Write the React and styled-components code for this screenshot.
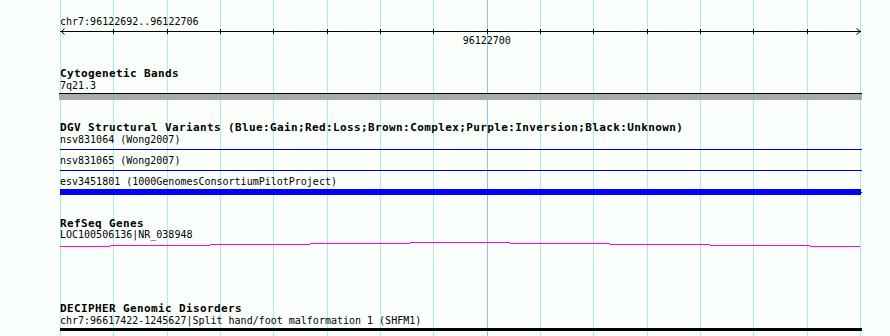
import React from 'react';
import styled, {createGlobalStyle} from 'styled-components';

// browser coordinates: track area runs from x=60 to x=860 for 15 bases
const TRACK_LEFT = 60;
const TRACK_WIDTH = 800;
const BASES = 15;
const START = 96122692;
const gridX = Array.from({length: BASES + 1}, (_, i) => Math.round(TRACK_LEFT + i * TRACK_WIDTH / BASES));
const HIGHLIGHT = 487;

const GlobalStyle = createGlobalStyle`
    html, body { margin:0; padding:0; background:#fbfffb; }
`;

const gridBackground = () => gridX.map(x => {
    const c = x === HIGHLIGHT ? '#8ec3df' : '#aee9ee';
    return `linear-gradient(${c}, ${c}) ${x}px 0 / 1px 100% no-repeat`;
}).join(', ');

const Page = styled.div`
    width : 890px;
    height : 336px;
    overflow : hidden;
    background : ${gridBackground()}, #fbfffb;
    padding-left : ${TRACK_LEFT}px;
    box-sizing : border-box;
    display : flex;
    flex-direction : column;
    font-family : "DejaVu Sans Mono", "Liberation Mono", monospace;
    color : #000;
`;

const Label = styled.div`
    height : 10px;
    line-height : 10px;
    font-size : 10px;
    white-space : nowrap;
    margin-top : ${p => p.$top || 0}px;
`;

const Title = styled.div`
    height : 11px;
    line-height : 11px;
    font-size : 11px;
    font-weight : bold;
    letter-spacing : 0.38px;
    white-space : nowrap;
    margin-top : ${p => p.$top || 0}px;
`;

const Bar = styled.div`
    width : ${p => p.$width || 802}px;
    height : ${p => p.$height}px;
    background : ${p => p.$color};
    border-top : ${p => p.$edge ? `1px solid ${p.$edge}` : 'none'};
    margin-top : ${p => p.$top || 0}px;
    margin-left : ${p => p.$shift || 0}px;
    flex-shrink : 0;
`;

const ThickBar = styled.div`
    display : flex;
    align-items : center;
    margin-top : ${p => p.$top || 0}px;
    height : 6px;
    &::before { content:""; width:801px; height:6px; background:#0000ff; }
    &::after { content:""; width:1px; height:1px; background:#0000ff; }
`;

const Drawing = styled.svg`
    display : block;
    flex-shrink : 0;
    margin-top : ${p => p.$top || 0}px;
`;

const Ruler = () => {
    const w = TRACK_WIDTH + 2;
    return (
        <Drawing width={w} height={9} shapeRendering="crispEdges">
            <line x1={0} y1={4.5} x2={TRACK_WIDTH + 1} y2={4.5} stroke="#000" />
            {gridX.slice(1, -1).map(x => (
                <line key={x} x1={x - TRACK_LEFT + 0.5} y1={2} x2={x - TRACK_LEFT + 0.5} y2={7} stroke="#000" />
            ))}
            <polyline points="4.5,1.5 1.5,4.5 4.5,7.5" fill="none" stroke="#000" shapeRendering="auto" />
            <polyline points={`${TRACK_WIDTH - 3.5},1.5 ${TRACK_WIDTH + 0.5},4.5 ${TRACK_WIDTH - 3.5},7.5`} fill="none" stroke="#000" shapeRendering="auto" />
        </Drawing>
    );
};

// stepped magenta line as the gif draws it
const geneSteps = [
    [60, 110, 4], [110, 210, 3], [210, 310, 2], [310, 410, 1], [410, 510, 0],
    [510, 610, 1], [610, 710, 2], [710, 810, 3], [810, 860, 4]
];

const GeneLine = () => (
    <Drawing $top={2} width={TRACK_WIDTH + 2} height={5} shapeRendering="crispEdges">
        {geneSteps.map(([a, b, y]) => (
            <line key={a} x1={a - TRACK_LEFT} y1={y + 0.5} x2={b - TRACK_LEFT} y2={y + 0.5} stroke="#ff00ff" />
        ))}
    </Drawing>
);

const App = () => {
    const mid = 96122700;
    const text = String(mid);
    const labelLeft = (mid - START) * TRACK_WIDTH / BASES - text.length * 6 / 2;

    return (
        <>
            <GlobalStyle />
            <Page>
                <Label $top={17}>chr7:{START}..{START + BASES - 1}</Label>
                <Ruler />
                <Label style={{paddingLeft: labelLeft}}>{text}</Label>

                <Title $top={22}>Cytogenetic Bands</Title>
                <Label $top={2}>7q21.3</Label>
                <Bar $top={2} $height={6} $color="#aaaaaa" $edge="#000" $shift={-1} $width={803} />

                <Title $top={22}>DGV Structural Variants (Blue:Gain;Red:Loss;Brown:Complex;Purple:Inversion;Black:Unknown)</Title>
                <Label $top={2}>nsv831064 (Wong2007)</Label>
                <Bar $top={4} $height={1} $color="#0000cc" />
                <Label $top={6}>nsv831065 (Wong2007)</Label>
                <Bar $top={4} $height={1} $color="#0000cc" />
                <Label $top={6}>esv3451801 (1000GenomesConsortiumPilotProject)</Label>
                <ThickBar $top={2} />

                <Title $top={23}>RefSeq Genes</Title>
                <Label $top={1}>LOC100506136|NR_038948</Label>
                <GeneLine />

                <Title $top={56}>DECIPHER Genomic Disorders</Title>
                <Label $top={2}>chr7:96617422-1245627|Split hand/foot malformation 1 (SHFM1)</Label>
                <Bar $top={2} $height={3} $color="#000" />
            </Page>
        </>
    );
};

export default App;
